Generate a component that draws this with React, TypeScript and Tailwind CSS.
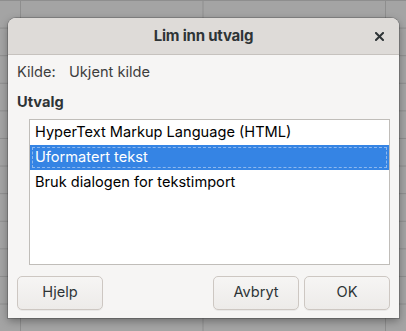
export default function App() {
  const rows = [
    'HyperText Markup Language (HTML)',
    'Uformatert tekst',
    'Bruk dialogen for tekstimport',
  ];

  return (
    <div className="w-[406px] h-[331px] overflow-hidden bg-[#a4a4a4] bg-[linear-gradient(to_right,#8e8e8e_1px,transparent_1px),linear-gradient(to_bottom,#8e8e8e_1px,transparent_1px)] bg-[size:182.5px_100%,100%_27.6px] bg-[position:20px_0,0_0] pl-[8px] pt-[18px] font-['Inter','Noto_Sans',sans-serif]">
      {/* Dialog */}
      <div className="w-[391px] h-[300px] flex flex-col bg-[#f6f5f4] rounded-t-[8px] shadow-[0_0_0_1px_rgba(0,0,0,0.18),0_3px_9px_rgba(0,0,0,0.35)]">
        {/* Title bar */}
        <div className="relative h-[37px] shrink-0 flex items-center justify-center bg-[#dedbd8] rounded-t-[8px] border-b border-[#c6c2be]">
          <span className="text-[15px] font-bold text-[#2e3436] tracking-[-0.2px]">Lim inn utvalg</span>
          <svg
            className="absolute right-[15px] top-[14px]"
            width="9"
            height="9"
            viewBox="0 0 9 9"
          >
            <path d="M1 1L8 8M8 1L1 8" stroke="#2e3436" strokeWidth="2" strokeLinecap="square" />
          </svg>
        </div>

        {/* Body */}
        <div className="flex-1 flex flex-col px-[9px] pt-[8px] pb-[8px] text-[14.6px] text-[#2e3436]">
          <div className="h-[20px] flex items-center text-[#3d3d3d]">
            <span className="w-[52px]">Kilde:</span>
            <span>Ukjent kilde</span>
          </div>
          <div className="h-[20px] mt-[10px] flex items-center font-bold">Utvalg</div>

          {/* List box */}
          <div className="ml-[12px] mt-[6px] h-[146px] bg-white border border-[#c0bdb9] text-black">
            {rows.map((r, i) =>
              i === 1 ? (
                <div key={r} className="h-[25px] bg-[#3584e4] text-white p-[2px]">
                  <div className="h-full border border-dashed border-[#8db8ee] flex items-center pl-[2px]">
                    {r}
                  </div>
                </div>
              ) : (
                <div key={r} className="h-[25px] flex items-center pl-[5px]">
                  {r}
                </div>
              )
            )}
          </div>

          {/* Buttons */}
          <div className="mt-auto flex gap-[5px]">
            <button className="w-[86px] h-[34px] rounded-[5px] border border-[#cdc7c2] bg-gradient-to-b from-[#f6f5f4] to-[#edebe9] text-[#2e3436] shadow-[0_1px_0_rgba(0,0,0,0.05)]">
              Hjelp
            </button>
            <div className="flex-1" />
            <button className="w-[86px] h-[34px] rounded-[5px] border border-[#cdc7c2] bg-gradient-to-b from-[#f6f5f4] to-[#edebe9] text-[#2e3436] shadow-[0_1px_0_rgba(0,0,0,0.05)]">
              Avbryt
            </button>
            <button className="w-[86px] h-[34px] rounded-[5px] border border-[#cdc7c2] bg-gradient-to-b from-[#f6f5f4] to-[#edebe9] text-[#2e3436] shadow-[0_1px_0_rgba(0,0,0,0.05)]">
              OK
            </button>
          </div>
        </div>
      </div>
    </div>
  );
}
